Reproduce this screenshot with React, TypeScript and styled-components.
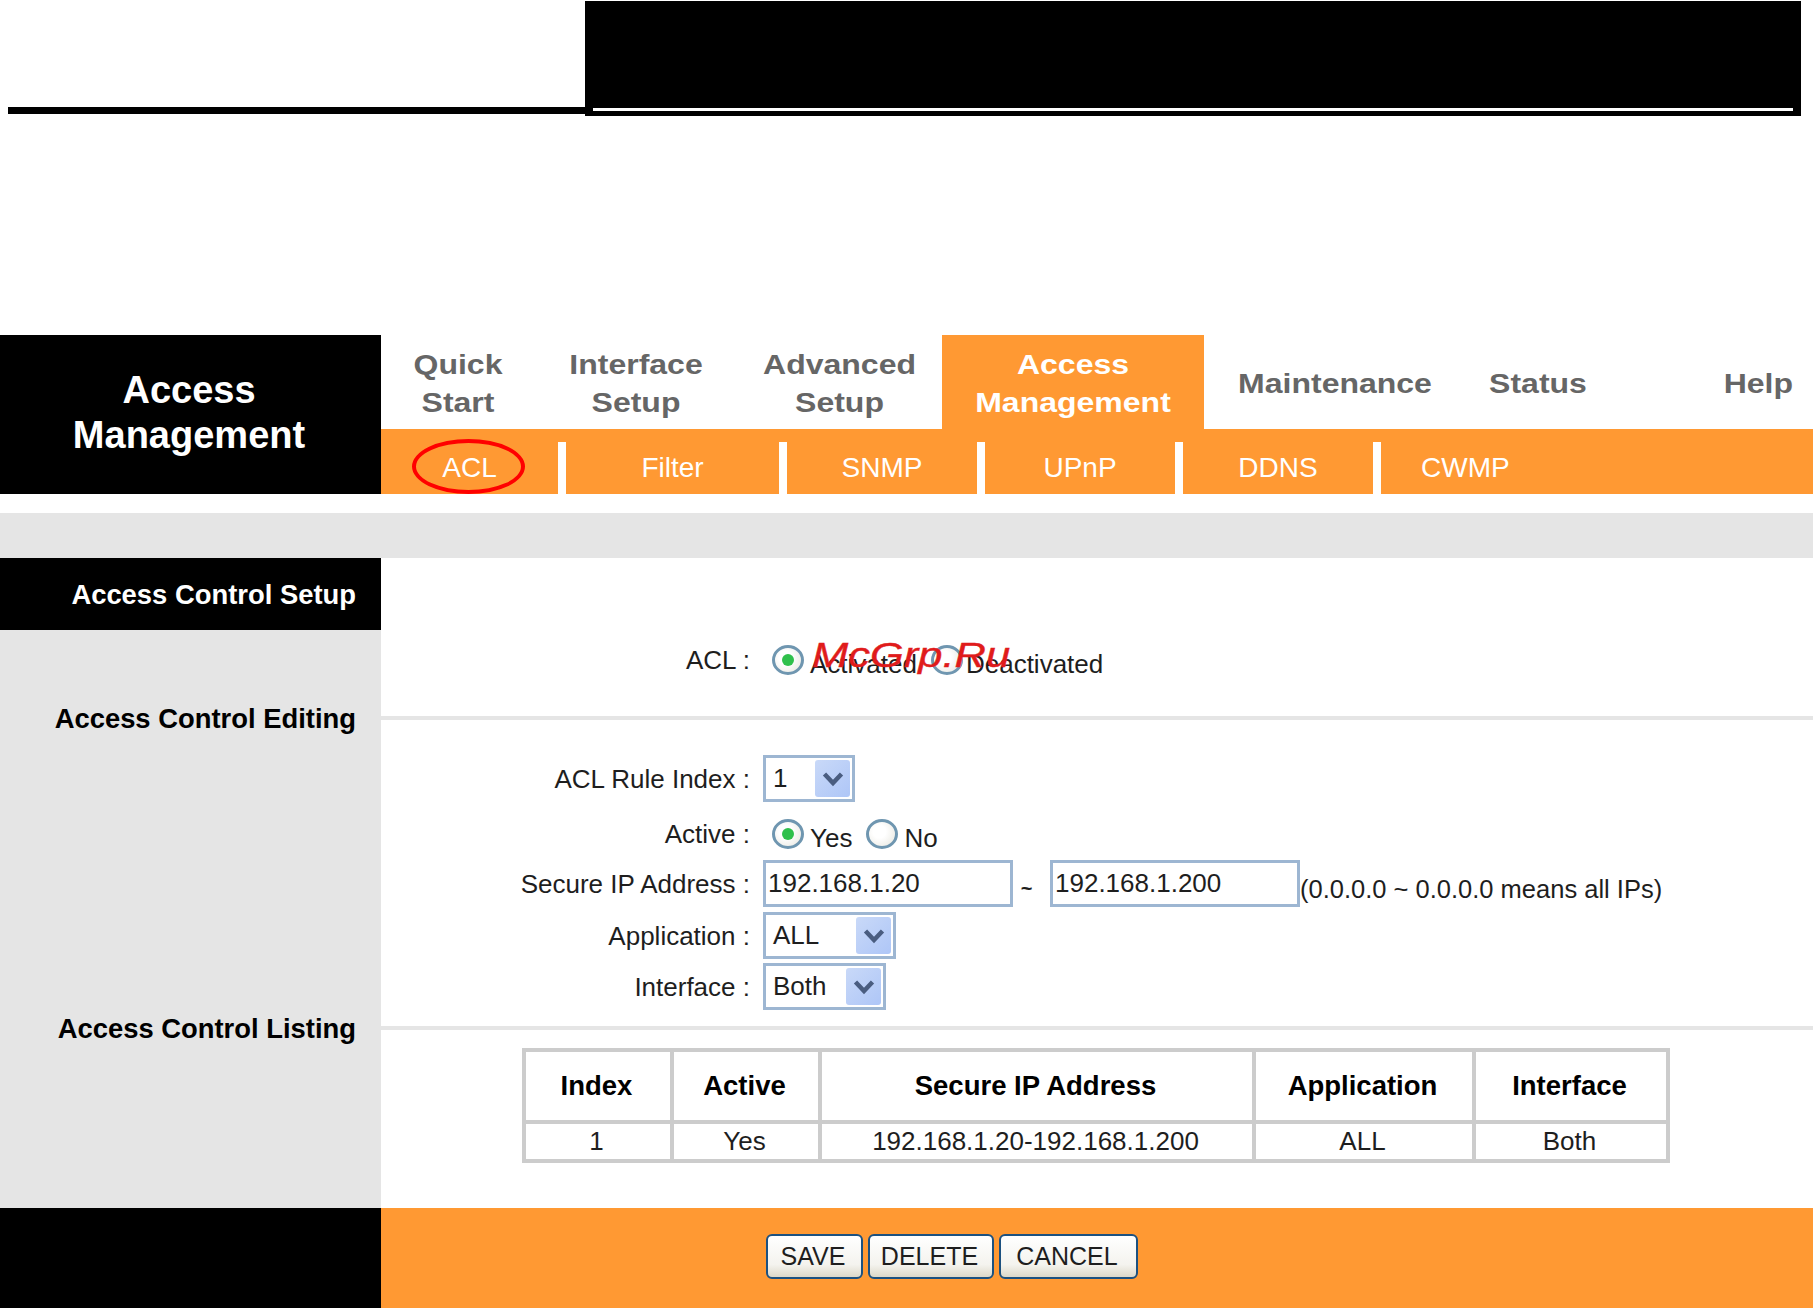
import React from 'react';
import styled, { createGlobalStyle } from 'styled-components';

const GlobalStyle = createGlobalStyle`
  html, body {
    margin: 0;
    padding: 0;
    background: #ffffff;
  }
  body {
    font-family: 'Liberation Sans', Arial, sans-serif;
    color: #1e1e1e;
    overflow: hidden;
  }
  * {
    box-sizing: border-box;
  }
`;

const ORANGE = '#ff9933';
const PANEL_GREY = '#e5e5e5';
const FIELD_BORDER = '#9db6d2';
const TABLE_LINE = '#cccccc';

const Page = styled.div`
  width: 1813px;
  height: 1308px;
`;

const TopBand = styled.div`
  display: flex;
  align-items: flex-start;
  height: 335px;
`;

const TopRule = styled.div`
  width: 577px;
  height: 114px;
  margin-left: 8px;
  border-bottom: 7px solid #000000;
`;

const TitleBlock = styled.div`
  display: flex;
  flex-direction: column;
  justify-content: flex-end;
  width: 1216px;
  height: 115px;
  margin-top: 1px;
  padding: 0 8px 5px;
  background: #000000;
`;

const TitleRule = styled.div`
  height: 3px;
  background: #ffffff;
`;

const Header = styled.header`
  display: grid;
  grid-template-columns: 381px 1fr;
  height: 159px;
`;

const Brand = styled.div`
  display: flex;
  align-items: center;
  justify-content: center;
  padding: 0 3px 4px 0;
  background: #000000;
  color: #ffffff;
  font-size: 38px;
  font-weight: bold;
  line-height: 45px;
  text-align: center;
`;

const NavColumn = styled.div`
  display: grid;
  grid-template-rows: 94px 65px;
`;

const Tabs = styled.nav`
  display: grid;
  grid-template-columns: 154px 202px 205px 262px 262px 144px 203px;
`;

const Tab = styled.div<{ $active?: boolean; $end?: boolean }>`
  display: flex;
  align-items: center;
  justify-content: ${(p) => (p.$end ? 'flex-end' : 'center')};
  padding-right: ${(p) => (p.$end ? '20px' : '0')};
  background: ${(p) => (p.$active ? ORANGE : 'transparent')};
  color: ${(p) => (p.$active ? '#ffffff' : '#666666')};
`;

const TabText = styled.span`
  display: block;
  font-size: 32px;
  font-weight: bold;
  line-height: 45px;
  text-align: center;
  transform: translateY(2px) scaleY(0.85);
`;

const SubBar = styled.div`
  display: grid;
  grid-template-columns: 177px 221px 198px 198px 198px 1fr;
  background: ${ORANGE};
`;

const SubItem = styled.div<{ $first?: boolean; $left?: boolean }>`
  position: relative;
  display: flex;
  align-items: center;
  justify-content: ${(p) => (p.$left ? 'flex-start' : 'center')};
  margin-top: 13px;
  padding-left: ${(p) => (p.$left ? '40px' : '0')};
  border-left: ${(p) => (p.$first ? 'none' : '8px solid #ffffff')};
  color: #ffffff;
  font-size: 28px;
`;

const Marker = styled.span`
  position: absolute;
  left: 31px;
  top: -3px;
  bottom: 0;
  width: 113px;
  border: 4px solid #ff0000;
  border-radius: 50%;
`;

const Band = styled.div`
  height: 45px;
  margin-top: 19px;
  background: ${PANEL_GREY};
`;

const Body = styled.div`
  display: grid;
  grid-template-columns: 381px 1fr;
  height: 650px;
`;

const Sidebar = styled.aside`
  background: ${PANEL_GREY};
`;

const SideHeading = styled.div`
  height: 72px;
  padding: 2px 25px 0 0;
  background: #000000;
  color: #ffffff;
  font-size: 27.4px;
  font-weight: bold;
  line-height: 70px;
  text-align: right;
`;

const SideLabel = styled.div<{ $top: number }>`
  margin-top: ${(p) => p.$top}px;
  padding-right: 25px;
  color: #000000;
  font-size: 27.4px;
  font-weight: bold;
  line-height: 34px;
  text-align: right;
`;

const Main = styled.main`
  display: flex;
  flex-direction: column;
`;

const Section = styled.section<{ $height?: number; $padTop: number }>`
  position: relative;
  height: ${(p) => (p.$height ? `${p.$height}px` : 'auto')};
  padding-top: ${(p) => p.$padTop}px;
  border-bottom: ${(p) => (p.$height ? `4px solid ${PANEL_GREY}` : 'none')};
`;

const Watermark = styled.span`
  position: absolute;
  left: 431px;
  top: 72px;
  color: #e01b1b;
  font-size: 43.5px;
  font-style: italic;
  line-height: 50px;
  -webkit-text-stroke: 0.5px #e01b1b;
  transform: scaleY(0.82);
`;

const FormRow = styled.div<{ $mt?: number }>`
  display: flex;
  align-items: center;
  margin-top: ${(p) => p.$mt ?? 0}px;
`;

const FieldLabel = styled.label<{ $raise?: number }>`
  flex: none;
  width: 369px;
  margin-right: 13px;
  font-size: 26px;
  line-height: 30px;
  text-align: right;
`;

const RadioGroup = styled.div`
  display: flex;
  align-items: center;
  height: 30px;
  margin-left: 9px;
`;

const Radio = styled.span<{ $checked?: boolean }>`
  display: flex;
  flex: none;
  align-items: center;
  justify-content: center;
  width: 32px;
  height: 30px;
  border: 3px solid #6f96b0;
  border-radius: 50%;
  background: radial-gradient(circle at 40% 40%, #ffffff 30%, #e6e5dd 100%);

  &::after {
    content: '';
    display: ${(p) => (p.$checked ? 'block' : 'none')};
    width: 12px;
    height: 12px;
    border-radius: 50%;
    background: #2fc04b;
  }
`;

const RadioText = styled.span<{ $ml?: number; $mr?: number }>`
  margin: 8px ${(p) => p.$mr ?? 0}px 0 ${(p) => p.$ml ?? 6}px;
  font-size: 26px;
  line-height: 30px;
`;

const Select = styled.div<{ $width: number }>`
  display: flex;
  align-items: center;
  justify-content: space-between;
  width: ${(p) => p.$width}px;
  height: 47px;
  padding: 0 2px 0 7px;
  border: 3px solid ${FIELD_BORDER};
  background: #ffffff;
  font-size: 26px;
`;

const SelectArrow = styled.span`
  display: flex;
  align-items: center;
  justify-content: center;
  width: 35px;
  height: 37px;
  border-radius: 3px;
  background: linear-gradient(135deg, #c9d9f8, #aec6f7);
`;

const TextField = styled.input`
  width: 250px;
  height: 47px;
  padding: 0 0 0 2px;
  border: 3px solid ${FIELD_BORDER};
  outline: none;
  background: #ffffff;
  color: #1e1e1e;
  font-family: inherit;
  font-size: 26px;
`;

const Tilde = styled.span`
  width: 37px;
  margin-top: 10px;
  padding-right: 10px;
  font-size: 20px;
  font-weight: bold;
  text-align: center;
`;

const Note = styled.span`
  margin-top: 12px;
  font-size: 25.5px;
  white-space: nowrap;
`;

const ListTable = styled.table`
  width: 1148px;
  margin-left: 141px;
  border-collapse: collapse;
  table-layout: fixed;

  th, td {
    padding: 0 3px 0 0;
    border: 4px solid ${TABLE_LINE};
    text-align: center;
  }
  th {
    height: 72px;
    color: #000000;
    font-size: 27.5px;
  }
  td {
    height: 39px;
    font-size: 26px;
  }
`;

const ListColumn = styled.col<{ $width: number }>`
  width: ${(p) => p.$width}px;
`;

const Footer = styled.footer`
  display: grid;
  grid-template-columns: 381px 1fr;
  height: 100px;
  background: #000000;
`;

const ButtonBar = styled.div`
  display: flex;
  align-items: flex-start;
  gap: 5px;
  padding: 26px 0 0 385px;
  background: ${ORANGE};
`;

const ActionButton = styled.button<{ $width: number }>`
  width: ${(p) => p.$width}px;
  height: 45px;
  padding: 0 3px 0 0;
  border: 2px solid #1c5180;
  border-radius: 6px;
  background: linear-gradient(180deg, #ffffff 0%, #f4f3ee 70%, #dcd8c8 100%);
  color: #1e1e1e;
  font-family: inherit;
  font-size: 25px;
`;

const Chevron = () => (
  <svg width="24" height="16" viewBox="0 0 24 16" fill="none">
    <path d="M3.5 3 L12 12 L20.5 3" stroke="#4a5d80" strokeWidth="4.5" />
  </svg>
);

const FakeSelect = ({ value, width }: { value: string; width: number }) => (
  <Select $width={width}>
    <span>{value}</span>
    <SelectArrow>
      <Chevron />
    </SelectArrow>
  </Select>
);

const columns = [148, 148, 434, 220, 194];

const App = () => (
  <Page>
    <GlobalStyle />
    <TopBand>
      <TopRule />
      <TitleBlock>
        <TitleRule />
      </TitleBlock>
    </TopBand>

    <Header>
      <Brand>
        Access
        <br />
        Management
      </Brand>
      <NavColumn>
        <Tabs>
          <Tab>
            <TabText>
              Quick
              <br />
              Start
            </TabText>
          </Tab>
          <Tab>
            <TabText>
              Interface
              <br />
              Setup
            </TabText>
          </Tab>
          <Tab>
            <TabText>
              Advanced
              <br />
              Setup
            </TabText>
          </Tab>
          <Tab $active>
            <TabText>
              Access
              <br />
              Management
            </TabText>
          </Tab>
          <Tab>
            <TabText>Maintenance</TabText>
          </Tab>
          <Tab>
            <TabText>Status</TabText>
          </Tab>
          <Tab $end>
            <TabText>Help</TabText>
          </Tab>
        </Tabs>
        <SubBar>
          <SubItem $first>
            ACL
            <Marker />
          </SubItem>
          <SubItem>Filter</SubItem>
          <SubItem>SNMP</SubItem>
          <SubItem>UPnP</SubItem>
          <SubItem>DDNS</SubItem>
          <SubItem $left>CWMP</SubItem>
        </SubBar>
      </NavColumn>
    </Header>

    <Band />

    <Body>
      <Sidebar>
        <SideHeading>Access Control Setup</SideHeading>
        <SideLabel $top={72}>Access Control Editing</SideLabel>
        <SideLabel $top={276}>Access Control Listing</SideLabel>
      </Sidebar>
      <Main>
        <Section $height={162} $padTop={87}>
          <FormRow>
            <FieldLabel>ACL :</FieldLabel>
            <RadioGroup>
              <Radio $checked />
              <RadioText $mr={14}>Activated</RadioText>
              <Radio />
              <RadioText $ml={3}>Deactivated</RadioText>
            </RadioGroup>
          </FormRow>
          <Watermark>McGrp.Ru</Watermark>
        </Section>

        <Section $height={310} $padTop={35}>
          <FormRow>
            <FieldLabel>ACL Rule Index :</FieldLabel>
            <FakeSelect value="1" width={92} />
          </FormRow>
          <FormRow $mt={17}>
            <FieldLabel>Active :</FieldLabel>
            <RadioGroup>
              <Radio $checked />
              <RadioText $mr={14}>Yes</RadioText>
              <Radio />
              <RadioText>No</RadioText>
            </RadioGroup>
          </FormRow>
          <FormRow $mt={11}>
            <FieldLabel>Secure IP Address :</FieldLabel>
            <TextField readOnly value="192.168.1.20" />
            <Tilde>~</Tilde>
            <TextField readOnly value="192.168.1.200" />
            <Note>(0.0.0.0 ~ 0.0.0.0 means all IPs)</Note>
          </FormRow>
          <FormRow $mt={5}>
            <FieldLabel>Application :</FieldLabel>
            <FakeSelect value="ALL" width={133} />
          </FormRow>
          <FormRow $mt={4}>
            <FieldLabel>Interface :</FieldLabel>
            <FakeSelect value="Both" width={123} />
          </FormRow>
        </Section>

        <Section $padTop={18}>
          <ListTable>
            <colgroup>
              {columns.map((w, i) => (
                <ListColumn key={i} $width={w} />
              ))}
            </colgroup>
            <thead>
              <tr>
                <th>Index</th>
                <th>Active</th>
                <th>Secure IP Address</th>
                <th>Application</th>
                <th>Interface</th>
              </tr>
            </thead>
            <tbody>
              <tr>
                <td>1</td>
                <td>Yes</td>
                <td>192.168.1.20-192.168.1.200</td>
                <td>ALL</td>
                <td>Both</td>
              </tr>
            </tbody>
          </ListTable>
        </Section>
      </Main>
    </Body>

    <Footer>
      <div />
      <ButtonBar>
        <ActionButton $width={97}>SAVE</ActionButton>
        <ActionButton $width={126}>DELETE</ActionButton>
        <ActionButton $width={139}>CANCEL</ActionButton>
      </ButtonBar>
    </Footer>
  </Page>
);

export default App;
